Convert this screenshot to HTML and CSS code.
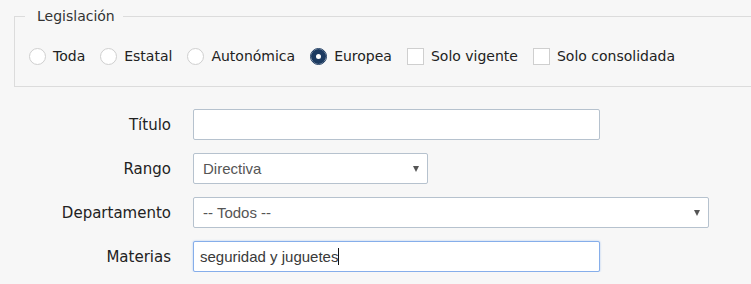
FILE: index.html
```html
<!DOCTYPE html>
<html lang="es">
<head>
  <meta charset="UTF-8">
  <title>Búsqueda de legislación</title>
  <link rel="stylesheet" href="styles.css">
</head>
<body>

  <!-- Tipo de legislación -->
  <fieldset class="legislacion">
    <legend>Legislación</legend>
    <div class="options">
      <label class="option"><input type="radio" name="tipo"> Toda</label>
      <label class="option"><input type="radio" name="tipo"> Estatal</label>
      <label class="option"><input type="radio" name="tipo"> Autonómica</label>
      <label class="option"><input type="radio" name="tipo" checked> Europea</label>
      <label class="option"><input type="checkbox"> Solo vigente</label>
      <label class="option"><input type="checkbox"> Solo consolidada</label>
    </div>
  </fieldset>

  <!-- Campos de búsqueda -->
  <form class="search-form">
    <label class="field-label" for="titulo">Título</label>
    <input class="field field-wide" id="titulo" type="text">

    <label class="field-label" for="rango">Rango</label>
    <span class="select-wrap select-short">
      <select class="field" id="rango">
        <option>Directiva</option>
      </select>
    </span>

    <label class="field-label" for="departamento">Departamento</label>
    <span class="select-wrap select-long">
      <select class="field" id="departamento">
        <option>-- Todos --</option>
      </select>
    </span>

    <label class="field-label">Materias</label>
    <div class="field field-wide field-focus">seguridad y juguetes<span class="caret"></span></div>
  </form>

</body>
</html>
```

FILE: styles.css
```css
* {
  box-sizing: border-box;
}

body {
  margin: 0;
  background: #f7f7f7;
  font-family: 'DejaVu Sans', Verdana, sans-serif;
  font-size: 15px;
  color: #222;
  overflow: hidden;
}

/* Legislación fieldset */
.legislacion {
  margin: 6px -20px 0 14px;
  padding: 22px 14px 21px 14px;
  border: 1px solid #dcdcdc;
  border-radius: 0;
}

.legislacion legend {
  margin-left: -4px;
  padding: 0 8px 0 12px;
  color: #333;
  font-size: 14px;
  line-height: 20px;
}

.options {
  display: flex;
  align-items: center;
  font-size: 14px;
}

.option {
  display: flex;
  align-items: center;
  margin-right: 15px;
  line-height: 17px;
}

.option input {
  -webkit-appearance: none;
  appearance: none;
  width: 17px;
  height: 17px;
  margin: 0 7px 0 0;
  border: 1px solid #cfcfcf;
  background: #fff;
}

.option input[type="radio"] {
  border-radius: 50%;
}

.option input[type="radio"]:checked {
  border-color: #1c3a60;
  box-shadow: inset 0 0 0 5px #1c3a60;
}

/* Form rows */
.search-form {
  display: grid;
  grid-template-columns: 171px 1fr;
  column-gap: 22px;
  row-gap: 13px;
  align-items: center;
  margin-top: 22px;
}

.field-label {
  text-align: right;
}

.field {
  display: block;
  height: 31px;
  margin: 0;
  padding: 0 6px;
  border: 1px solid #b6c2ce;
  border-radius: 2px;
  background: #fff;
  font-family: 'Liberation Sans', Arial, sans-serif;
  font-size: 15px;
  color: #444;
  outline: none;
}

.field-wide {
  width: 407px;
}

.field-focus {
  display: flex;
  align-items: center;
  border-color: #86aeea;
  box-shadow: 0 0 2px rgba(110, 160, 235, 0.6);
  color: #3a3a3a;
}

.caret {
  display: inline-block;
  width: 1px;
  height: 17px;
  background: #111;
}

.select-wrap {
  position: relative;
  display: block;
}

.select-short {
  width: 235px;
}

.select-long {
  width: 516px;
}

.select-wrap select {
  -webkit-appearance: none;
  appearance: none;
  width: 100%;
  padding-left: 9px;
  color: #555;
}

.select-wrap::after {
  content: "";
  position: absolute;
  right: 9px;
  top: 13px;
  border-left: 3.5px solid transparent;
  border-right: 3.5px solid transparent;
  border-top: 6px solid #555;
  pointer-events: none;
}
```
